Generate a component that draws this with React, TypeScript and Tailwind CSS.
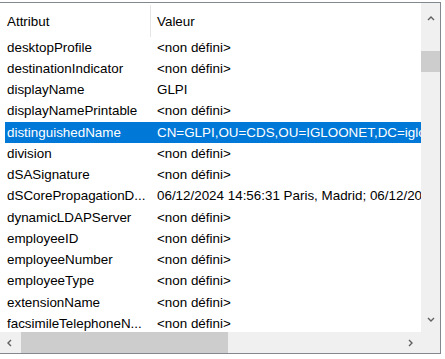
import React from 'react';

const rows: [string, string][] = [
  ['desktopProfile', '<non défini>'],
  ['destinationIndicator', '<non défini>'],
  ['displayName', 'GLPI'],
  ['displayNamePrintable', '<non défini>'],
  ['distinguishedName', 'CN=GLPI,OU=CDS,OU=IGLOONET,DC=igloonet,DC=local'],
  ['division', '<non défini>'],
  ['dSASignature', '<non défini>'],
  ['dSCorePropagationD...', '06/12/2024 14:56:31 Paris, Madrid; 06/12/2024 14:56:31 Paris, Madrid'],
  ['dynamicLDAPServer', '<non défini>'],
  ['employeeID', '<non défini>'],
  ['employeeNumber', '<non défini>'],
  ['employeeType', '<non défini>'],
  ['extensionName', '<non défini>'],
  ['facsimileTelephoneN...', '<non défini>'],
];

const SELECTED = 4;

const Chevron = ({ dir }: { dir: 'up' | 'down' | 'left' | 'right' }) => {
  const d = {
    up: 'M1 5 L4 2 L7 5',
    down: 'M1 2 L4 5 L7 2',
    left: 'M5 1 L2 4 L5 7',
    right: 'M2 1 L5 4 L2 7',
  }[dir];
  return (
    <svg width="8" height="8" viewBox="0 0 8 8">
      <path d={d} fill="none" stroke="#606060" strokeWidth="1.4" />
    </svg>
  );
};

export default function App() {
  return (
    <div
      className="w-[445px] h-[359px] bg-white overflow-hidden pt-[2px] text-[13.4px] text-black"
      style={{ fontFamily: '"Liberation Sans", Arial, sans-serif' }}
    >
      <div className="-ml-[1px] w-[442px] h-[352px] border border-[#828790] grid grid-cols-[421px_19px] grid-rows-[329px_21px]">
        {/* list */}
        <div className="overflow-hidden bg-white">
          <div className="h-[34px] flex items-center relative">
            <div className="w-[150px] pl-[7px] pt-[4px]">Attribut</div>
            <div className="absolute left-[150px] top-[2px] h-[32px] w-px bg-[#e5e5e5]" />
            <div className="pl-[7px] pt-[4px]">Valeur</div>
          </div>
          {rows.map(([attr, val], i) => (
            <div
              key={attr}
              className={`ml-[5px] h-[21.25px] flex items-center whitespace-nowrap ${
                i === SELECTED ? 'bg-[#0078d7] text-white' : ''
              }`}
            >
              <div className="w-[145px] shrink-0 pl-[2px] overflow-hidden">{attr}</div>
              <div className="pl-[7px] shrink-0">{val}</div>
            </div>
          ))}
        </div>
        {/* vertical scrollbar */}
        <div className="bg-[#f0f0f0] flex flex-col items-center">
          <div className="h-[30px] flex items-center justify-center pt-[1px]">
            <Chevron dir="up" />
          </div>
          <div className="mt-[18px] w-full h-[21px] bg-[#cdcdcd]" />
          <div className="flex-1" />
          <div className="h-[20px] flex items-center justify-center mb-[2px]">
            <Chevron dir="down" />
          </div>
        </div>
        {/* horizontal scrollbar */}
        <div className="bg-[#f0f0f0] flex items-center">
          <div className="w-[18px] flex items-center justify-center pl-[1px]">
            <Chevron dir="left" />
          </div>
          <div className="ml-[3px] w-[207px] h-full bg-[#cdcdcd]" />
          <div className="flex-1" />
          <div className="w-[19px] flex items-center justify-center mr-[1px]">
            <Chevron dir="right" />
          </div>
        </div>
        <div className="bg-[#f0f0f0]" />
      </div>
    </div>
  );
}
